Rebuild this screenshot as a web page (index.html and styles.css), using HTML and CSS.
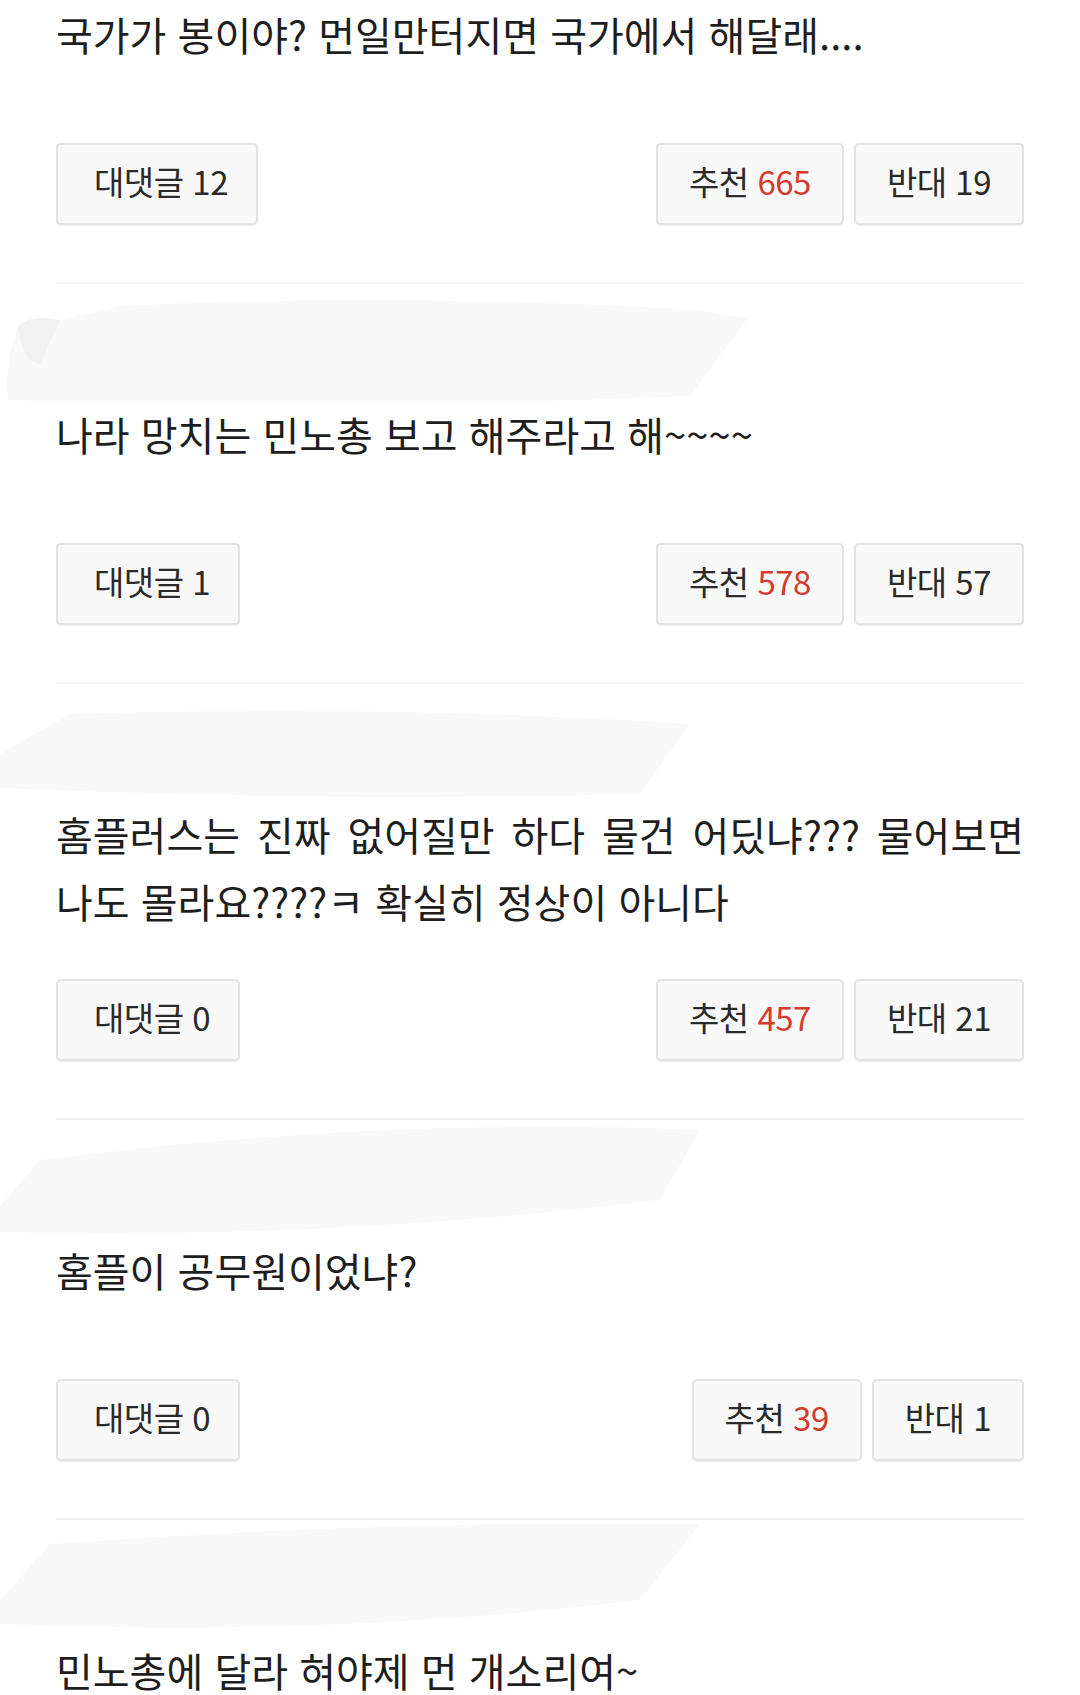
FILE: index.html
```html
<!DOCTYPE html>
<html lang="ko">
<head>
    <meta charset="UTF-8">
    <meta name="viewport" content="width=device-width, initial-scale=1.0">
    <title>댓글</title>
    <link rel="stylesheet" href="styles.css">
</head>
<body>
    <div class="comment-list">
        <div class="comment first">
            <p class="content">국가가 봉이야? 먼일만터지면 국가에서 해달래....</p>
            <div class="actions">
                <button class="btn reply">대댓글 12</button>
                <div class="votes">
                    <button class="btn">추천 <span class="up">665</span></button>
                    <button class="btn">반대 19</button>
                </div>
            </div>
        </div>

        <div class="comment">
            <div class="author">
                <svg class="smudge" viewBox="0 0 760 117" preserveAspectRatio="none">
                    <path d="M18 42 Q30 30 60 36 L120 22 Q400 8 700 26 L748 34 L690 112 Q360 126 8 116 Q4 80 18 42 Z" fill="#f9f9f9"/>
                    <path d="M18 42 Q30 30 60 36 L40 80 Q22 78 18 42 Z" fill="#f1f1f1"/>
                </svg>
            </div>
            <p class="content">나라 망치는 민노총 보고 해주라고 해~~~~</p>
            <div class="actions">
                <button class="btn reply">대댓글 1</button>
                <div class="votes">
                    <button class="btn">추천 <span class="up">578</span></button>
                    <button class="btn">반대 57</button>
                </div>
            </div>
        </div>

        <div class="comment">
            <div class="author">
                <svg class="smudge" viewBox="0 0 760 117" preserveAspectRatio="none">
                    <path d="M0 70 L70 30 Q380 20 690 40 L640 110 Q320 118 0 104 Z" fill="#f9f9f9"/>
                </svg>
            </div>
            <p class="content">홈플러스는 진짜 없어질만 하다 물건 어딨냐??? 물어보면 나도 몰라요????ㅋ 확실히 정상이 아니다</p>
            <div class="actions">
                <button class="btn reply">대댓글 0</button>
                <div class="votes">
                    <button class="btn">추천 <span class="up">457</span></button>
                    <button class="btn">반대 21</button>
                </div>
            </div>
        </div>

        <div class="comment">
            <div class="author">
                <svg class="smudge" viewBox="0 0 760 117" preserveAspectRatio="none">
                    <path d="M0 86 L40 40 Q380 -4 700 10 L660 80 Q330 120 0 112 Z" fill="#f9f9f9"/>
                </svg>
            </div>
            <p class="content">홈플이 공무원이었냐?</p>
            <div class="actions">
                <button class="btn reply">대댓글 0</button>
                <div class="votes">
                    <button class="btn">추천 <span class="up">39</span></button>
                    <button class="btn">반대 1</button>
                </div>
            </div>
        </div>

        <div class="comment">
            <div class="author">
                <svg class="smudge" viewBox="0 0 760 117" preserveAspectRatio="none">
                    <path d="M0 80 L50 24 Q380 0 700 4 L640 80 Q330 118 0 104 Z" fill="#f9f9f9"/>
                </svg>
            </div>
            <p class="content">민노총에 달라 혀야제 먼 개소리여~</p>
        </div>
    </div>
</body>
</html>
```

FILE: styles.css
```css
body {
    margin: 0;
    background: #fff;
    color: #1e1e1e;
    font-family: "Noto Sans CJK KR", "Noto Sans", sans-serif;
    overflow: hidden;
}

.comment-list {
    padding: 1px 56px 0;
}

.comment {
    padding-bottom: 57px;
    border-bottom: 2px solid #f1f1f1;
}

.comment:last-child {
    border-bottom: none;
}

.author {
    height: 117px;
    margin-left: -56px;
}

.smudge {
    display: block;
    width: 760px;
    height: 117px;
}

.content {
    margin: 0 0 44px;
    min-height: 98px;
    font-size: 40px;
    line-height: 67px;
    text-align: justify;
    word-break: keep-all;
}

.actions {
    display: flex;
    justify-content: space-between;
}

.votes {
    display: flex;
    gap: 10px;
}

.btn {
    height: 82px;
    padding: 0 31px 6px;
    background: #f9f9f9;
    border: 2px solid #e3e3e3;
    border-radius: 5px;
    box-shadow: 0 1px 1px rgba(0, 0, 0, 0.06);
    color: #2a2a2a;
    font-family: inherit;
    font-size: 33px;
    letter-spacing: -0.5px;
}

.btn.reply {
    padding-left: 36px;
    padding-right: 28px;
}

.up {
    color: #d53a2c;
}
```
